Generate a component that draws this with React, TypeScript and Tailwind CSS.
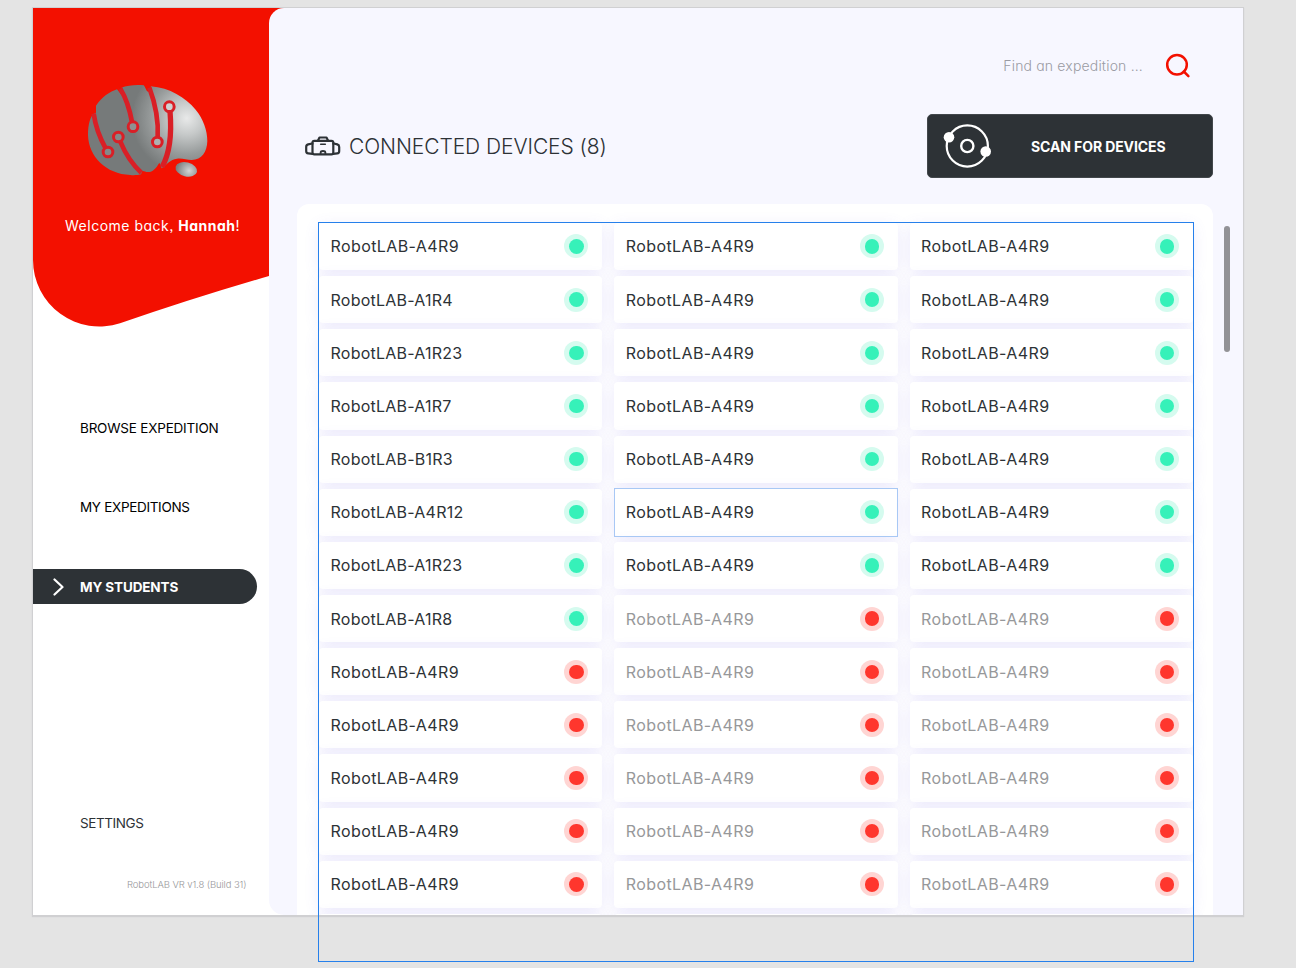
import React from "react";

type Device = { name: string; online: boolean; dimmed: boolean };

const firstColumn = [
  "RobotLAB-A4R9",
  "RobotLAB-A1R4",
  "RobotLAB-A1R23",
  "RobotLAB-A1R7",
  "RobotLAB-B1R3",
  "RobotLAB-A4R12",
  "RobotLAB-A1R23",
  "RobotLAB-A1R8",
];

const ROWS = 13;

const columns: Device[][] = [0, 1, 2].map((col) =>
  Array.from({ length: ROWS }, (_, row) => {
    const online = row < (col === 0 ? 8 : 7);
    return {
      name: col === 0 ? (firstColumn[row] ?? "RobotLAB-A4R9") : "RobotLAB-A4R9",
      online,
      dimmed: col > 0 && !online,
    };
  }),
);

function BrainLogo() {
  return (
    <svg viewBox="0 0 480 360" className="h-[120px] w-[160px]">
      <defs>
        <radialGradient id="lobe" gradientUnits="userSpaceOnUse" cx="350" cy="145" r="165">
          <stop offset="0" stopColor="#e8e9e9" />
          <stop offset="0.3" stopColor="#c6c9c9" />
          <stop offset="0.65" stopColor="#979b9b" />
          <stop offset="1" stopColor="#767a7a" />
        </radialGradient>
        <radialGradient id="stem" gradientUnits="userSpaceOnUse" cx="358" cy="300" r="38">
          <stop offset="0" stopColor="#d2d4d4" />
          <stop offset="1" stopColor="#7b7f7f" />
        </radialGradient>
      </defs>
      <path
        fill="url(#lobe)"
        d="M78 107C96 80 118 66 143 57L152 54C174 46 196 44 222 46L242 49C300 54 345 82 377 119C400 147 412 181 412 213C411 246 396 269 365 270C350 270 337 264 321 266C300 268 290 284 275 295L268 278C258 296 246 307 234 306C226 306 222 302 217 303L213 313C200 316 190 316 181 315C108 312 56 260 54 195C54 163 61 138 72 131L78 128Z"
      />
      <ellipse cx="349" cy="298" rx="33" ry="21" fill="url(#stem)" transform="rotate(14 349 298)" />
      <path fill="#f31000" d="M140 56L156 52L163 75L154 74ZM221 44L242 46L246 68L231 64Z" />
      <g fill="none" stroke="#d91f26" strokeWidth="14">
        <path d="M71 131C76 166 90 205 107 235" />
        <path d="M151 56C170 87 180 123 186 156" />
        <path d="M238 53C256 101 266 151 263 203" />
        <path d="M300 124C305 185 301 248 276 291" strokeWidth="16" />
        <path d="M151 215C166 251 186 283 214 308" />
      </g>
      <g fill="#aeb1b1" stroke="#d91f26" strokeWidth="9">
        <circle cx="114" cy="246" r="14.5" fill="#858989" />
        <circle cx="145" cy="201" r="14.5" fill="#858989" />
        <circle cx="189" cy="170" r="14.5" fill="#8e9292" />
        <circle cx="262" cy="216" r="14.5" />
        <circle cx="298" cy="110" r="14.5" fill="#cfd1d1" />
      </g>
    </svg>
  );
}

function Sidebar() {
  return (
    <aside className="relative flex w-[236px] shrink-0 flex-col">
      <svg viewBox="0 0 256 320" className="absolute top-0 left-0 h-[320px] w-[256px]">
        <path fill="#f31000" d="M0 0H256V40L236 60V268Q160 290 87 315.300A66.500 66.500 0 0 1 0 252Z" />
      </svg>
      <div className="relative flex h-[319px] flex-col pt-[62px] pl-[37px]">
        <BrainLogo />
        <p className="mt-[26px] -ml-[5px] text-[14px] leading-5 tracking-[0.5px] whitespace-nowrap text-white">
          Welcome back, <b className="font-bold">Hannah</b>!
        </p>
      </div>
      <nav className="mt-[83px] flex flex-col text-[13.5px] leading-[36px] text-black">
        <a className="h-[36px] pl-[47px] tracking-[-0.2px]">BROWSE EXPEDITION</a>
        <a className="mt-[43px] h-[36px] pl-[47px] tracking-[-0.32px]">MY EXPEDITIONS</a>
        <a className="mt-[44px] flex h-[35px] w-[224px] items-center rounded-r-full bg-[#2d3236] pl-[20px] font-bold tracking-[-0.12px] text-white">
          <svg viewBox="0 0 11 18" className="h-[18px] w-[11px]" fill="none" stroke="white" strokeWidth="2.200" strokeLinecap="round" strokeLinejoin="round">
            <path d="M1.500 1.500L9.500 9L1.500 16.500" />
          </svg>
          <span className="ml-[16px]">MY STUDENTS</span>
        </a>
        <a className="mt-[201px] h-[36px] pl-[47px] tracking-[-0.42px] text-[#2d3236]">SETTINGS</a>
      </nav>
      <p className="mt-[37px] pl-[94px] text-[9.5px] leading-[14px] font-light tracking-[-0.1px] whitespace-nowrap text-[#97979a]">
        RobotLAB VR v1.8 (Build 31)
      </p>
    </aside>
  );
}

function HeadsetIcon() {
  return (
    <svg viewBox="0 0 36 20" className="-mt-px h-[20px] w-[36px]" fill="none" stroke="#2d3236" strokeWidth="2.200" strokeLinecap="round" strokeLinejoin="round">
      <rect x="7.500" y="4.800" width="20.800" height="13.600" rx="1.800" />
      <path d="M7.500 7.700H6L3.200 8.400Q1.200 9 1.200 11V15Q1.200 17.200 3.200 17.400L7.500 17.800" />
      <path d="M28.300 7.700H29.800L32.300 8.400Q34.200 9 34.200 11V15Q34.200 17.200 32.300 17.400L28.300 17.800" />
      <path d="M13 4.500L14.500 1.500H21.500L23 4.500" />
      <path d="M15.700 8.300H20.300" strokeWidth="1.600" />
      <path d="M15.600 18V16.600Q15.800 15 18 15Q20.200 15 20.400 16.600V18" strokeWidth="1.800" />
    </svg>
  );
}

function ScanIcon() {
  return (
    <svg viewBox="0 0 50 46" className="h-[46px] w-[50px]" fill="none" stroke="white" strokeWidth="2.200">
      <circle cx="25.300" cy="23" r="20.600" />
      <circle cx="25.300" cy="23" r="6.100" strokeWidth="2.400" />
      <circle cx="7" cy="14.200" r="5.300" fill="white" stroke="none" />
      <circle cx="43.700" cy="28.500" r="5.300" fill="white" stroke="none" />
    </svg>
  );
}

function DeviceCard({ device }: { device: Device }) {
  const spacing = device.name.includes("1") ? "tracking-[0.24px]" : "tracking-[0.4px]";
  const colour = device.dimmed ? "text-[#97989a]" : "text-[#2d3236]";
  return (
    <div className="flex h-[47.170px] shrink-0 items-center justify-between rounded-[4px] bg-white pr-[14px] pl-[11.500px] shadow-[0_3px_15px_rgba(105,95,235,0.13)]">
      <span className={`text-[16px] leading-6 ${spacing} ${colour}`}>{device.name}</span>
      <span
        className={
          device.online
            ? "flex size-6 items-center justify-center rounded-full bg-[#d5fbef]"
            : "flex size-6 items-center justify-center rounded-full bg-[#ffd5d3]"
        }
      >
        <span
          className={
            device.online
              ? "size-[14.400px] rounded-full bg-[#36f1b9]"
              : "size-[14.400px] rounded-full bg-[#ff362d]"
          }
        />
      </span>
    </div>
  );
}

function Main() {
  return (
    <main className="relative flex min-w-0 flex-1 flex-col rounded-l-[15px] bg-[#f7f7ff] pt-[45px] pr-[30px] pl-[28px]">
      <div className="flex h-[26px] items-center justify-end pr-[22px]">
        <span className="-mt-px text-[14px] leading-6 font-light tracking-[0.17px] text-[#9a9ba3]">
          Find an expedition ...
        </span>
        <svg viewBox="0 0 26 26" className="ml-[22px] h-[26px] w-[26px]" fill="none" stroke="#f31000" strokeWidth="2.500" strokeLinecap="round">
          <circle cx="12" cy="11.700" r="9.800" />
          <path d="M18.800 18.500L23.400 23.100" />
        </svg>
      </div>
      <div className="mt-[35px] flex h-[64px] items-center justify-between">
        <h1 className="flex items-center pl-[8px] text-[21px] leading-8 font-light tracking-[-0.08px] whitespace-nowrap text-[#2d3236]">
          <HeadsetIcon />
          <span className="mt-px ml-[8px]">CONNECTED DEVICES (8)</span>
        </h1>
        <button className="flex h-[64px] w-[286px] items-center rounded-[5px] border border-[#42474b] bg-[#2d3236] pl-[14px] text-[14px] font-bold whitespace-nowrap text-white">
          <ScanIcon />
          <span className="mt-px ml-[39px] tracking-[-0.1px]">SCAN FOR DEVICES</span>
        </button>
      </div>
      <section className="mt-[26px] min-h-0 flex-1 overflow-hidden rounded-t-[12px] bg-white pt-[18.900px] pr-[20px] pl-[22px]">
        <div className="grid w-[874px] grid-cols-3 gap-x-[11.800px]">
          {columns.map((devices, col) => (
            <div key={col} className="flex flex-col gap-[6px]">
              {devices.map((device, row) => (
                <DeviceCard key={row} device={device} />
              ))}
              <div className="h-[47px] rounded-[4px] bg-white shadow-[0_3px_15px_rgba(105,95,235,0.13)]" />
            </div>
          ))}
        </div>
      </section>
      <div className="absolute top-[218px] right-[13px] h-[126px] w-[6px] rounded-full bg-[#929296]" />
    </main>
  );
}

export default function App() {
  return (
    <div className="relative h-[968px] w-[1296px] overflow-hidden bg-[#e4e4e4] pt-[8px] pl-[33px] font-['Inter',sans-serif] [font-feature-settings:'cv11','ss03']">
      <div className="flex h-[907px] w-[1210px] overflow-hidden bg-white shadow-[0_0_0_1px_#d0d0d2,0_1px_1px_1px_#d0d0d2]">
        <Sidebar />
        <Main />
      </div>
      <div className="pointer-events-none absolute top-[222px] left-[318px] h-[740px] w-[876px] border border-[#2680eb]" />
      <div className="pointer-events-none absolute top-[488px] left-[614px] h-[49px] w-[284px] border border-[#a8c8f5]" />
    </div>
  );
}
